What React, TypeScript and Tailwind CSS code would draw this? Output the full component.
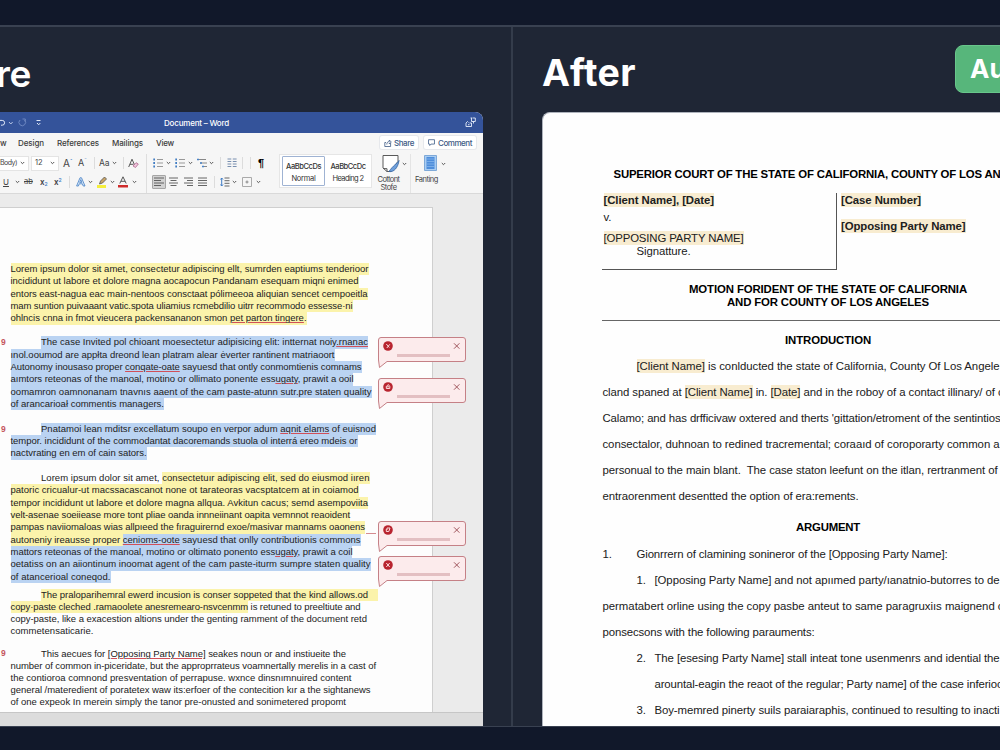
import { useLayoutEffect, useRef } from "react";
import type { ReactNode } from "react";
import clsx from "clsx";

type LineProps = {
  width: number;
  children: ReactNode;
  className?: string;
};

// One typeset line: the tracking is spread so the text fills the given width
const Line = ({ width, children, className }: LineProps) => {
  const ref = useRef<HTMLSpanElement>(null);

  useLayoutEffect(() => {
    const el = ref.current;
    if (!el) return;
    el.style.letterSpacing = "0px";
    const natural = el.getBoundingClientRect().width;
    const count = el.textContent?.length || 1;
    el.style.letterSpacing = `${(width - natural) / count}px`;
  }, [width]);

  return (
    <div className={clsx("whitespace-pre", className)}>
      <span ref={ref} className="inline-block">
        {children}
      </span>
    </div>
  );
};

const Yellow = ({ children }: { children: ReactNode }) => (
  <span className="inline-block bg-[#fbf3ab]">{children}</span>
);

const Blue = ({ children }: { children: ReactNode }) => (
  <span className="inline-block bg-[#bad3f2]">{children}</span>
);

const Tan = ({ children }: { children: ReactNode }) => (
  <span className="bg-[#f8ecd0] py-px">{children}</span>
);

const Typo = ({ children }: { children: ReactNode }) => (
  <span className="underline decoration-[#d0505a] decoration-1 underline-offset-1">
    {children}
  </span>
);

const Chevron = ({ className }: { className?: string }) => (
  <svg viewBox="0 0 5 4" className={clsx("h-1 w-[5px] shrink-0", className)}>
    <path d="M.8 1l1.7 1.7L4.2 1" fill="none" stroke="#555" strokeWidth="1" />
  </svg>
);

const Sep = ({ className }: { className?: string }) => (
  <div className={clsx("h-3 w-px shrink-0 bg-[#dcdcdc]", className)} />
);

const ListIcon = ({ kind, className }: { kind: string; className?: string }) => (
  <svg viewBox="0 0 10 10" className={clsx("size-2.5 shrink-0", className)}>
    {kind === "multi" ? (
      <>
        <path d="M0 1.5h9M3 5h7M5 8.5h5" stroke="#888" strokeWidth="1" />
        <path d="M0 1.5h2M3 5h2M5 8.5h2" stroke="#4a84c8" strokeWidth="1.4" />
      </>
    ) : (
      <>
        <path d="M4 1.5h6M4 5h6M4 8.5h6" stroke="#999" strokeWidth="1" />
        <path d="M.3 1.5h1.7M.3 5h1.7M.3 8.5h1.7" stroke="#3f7cc4" strokeWidth="1.8" />
      </>
    )}
  </svg>
);

const AlignIcon = ({ d, className }: { d: string; className?: string }) => (
  <svg viewBox="0 0 10 10" className={clsx("size-2.5 shrink-0", className)}>
    <path d={d} stroke="#555" strokeWidth=".9" />
  </svg>
);

const TitleBar = () => (
  <div className="relative flex h-[21px] items-center bg-[#34539a] text-white">
    <svg viewBox="0 0 44 10" className="h-2.5 w-11" fill="none">
      <path d="M0 2.4h2.2a2.3 2.3 0 010 4.8H1" stroke="#dfe7f7" />
      <path d="M9 4l1.8 2 1.8-2" stroke="#b9c7e6" />
      <path d="M20 2a3.3 3.3 0 104.500 0M22.500 1h2.800v2.800" stroke="#6d87c0" />
      <path d="M36.500 2.500h4M37 5l1.700 1.800L40.300 5" stroke="#dfe7f7" />
    </svg>
    <span className="absolute left-[164px] top-0 text-[8px] font-medium leading-[22px]">
      <Line width={65}>Document – Word</Line>
    </span>
    <svg viewBox="0 0 11 11" className="absolute left-[465px] top-[5px] size-[11px]" fill="none" stroke="#e8eefa">
      <path d="M5.500 1h2M6.500 1v3.500h3.800V1H8M8.500 4.500v2M1 6v3.500h5.500V6H4.500M1 6l1.500-1.500 1 1M3 7.700h1.500" strokeWidth=".9" />
    </svg>
  </div>
);

const Tabs = () => (
  <div className="flex h-[19px] items-center text-[8px] font-medium text-[#3c3c3c]">
    <span className="w-[18px]">w</span>
    <Line width={26} className="w-[39px]">Design</Line>
    <Line width={42} className="w-[55px]">References</Line>
    <Line width={31} className="w-11">Mailings</Line>
    <Line width={18} className="w-[224px]">View</Line>
    <div className="flex h-[13px] w-[38px] items-center rounded-[2px] bg-white pl-1 text-[#3d5a85] ring-1 ring-[#e6e8ec]">
      <svg viewBox="0 0 8 8" className="mr-0.5 size-2 shrink-0" fill="none" stroke="currentColor" strokeWidth=".8">
        <path d="M.8 3.500v4h5.800V4M.8 3.500H2M2.800 5.500c0-2 1-3 2.500-3V1l2 2-2 2V3.700" />
      </svg>
      <Line width={20}>Share</Line>
    </div>
    <div className="ml-1.5 flex h-[13px] w-[52px] items-center rounded-[2px] bg-white pl-1 text-[#3d5a85] ring-1 ring-[#e6e8ec]">
      <svg viewBox="0 0 8 8" className="mr-[3px] size-[7px] shrink-0" fill="none" stroke="currentColor" strokeWidth=".9">
        <path d="M.6.8h6.800v5H3.500L2 7.400V5.800H.6z" />
      </svg>
      <Line width={34}>Comment</Line>
    </div>
  </div>
);

const FontGroup = () => (
  <div className="flex w-[146px] shrink-0 flex-col">
    <div className="flex h-[18px] items-center">
      <div className="flex h-[13px] w-7 shrink-0 items-center justify-between bg-white pr-[3px] text-[7px] ring-1 ring-[#e4e4e4]">
        <Line width={17}>Body)</Line>
        <Chevron />
      </div>
      <div className="ml-1 flex h-[13px] w-[26px] shrink-0 items-center justify-between bg-white px-[3px] text-[7.500px] ring-1 ring-[#e4e4e4]">
        12
        <Chevron />
      </div>
      <span className="ml-[5px] w-2.5 whitespace-nowrap text-[10px]">
        A<sup className="text-[6px] text-[#3f7cc4]">ˆ</sup>
      </span>
      <span className="ml-[5px] w-2.5 whitespace-nowrap text-[9px]">
        A<sup className="text-[6px] text-[#3f7cc4]">ˇ</sup>
      </span>
      <Sep className="ml-1.5" />
      <span className="ml-1 w-[11px] text-[8.500px]">Aa</span>
      <Chevron className="ml-0.5" />
      <Sep className="ml-1.5" />
      <svg viewBox="0 0 11 11" className="ml-1 size-[11px] shrink-0" fill="none">
        <path d="M.7 9L4 1.200 7 8M1.900 6.300h3.500" stroke="#555" />
        <path d="M5 8l3-3.300L10.300 6 7.500 9.500z" fill="#f0c5dc" stroke="#b0688f" strokeWidth=".8" />
      </svg>
    </div>
    <div className="flex h-[19px] items-center">
      <span className="ml-[3px] w-3 text-[8px] underline">U</span>
      <Chevron />
      <span className="ml-1 w-[13px] text-[7.500px] line-through">ab</span>
      <span className="ml-[3px] w-[11px] whitespace-nowrap text-[8px] font-semibold">
        x<sub className="text-[5px] text-[#3f7cc4]">2</sub>
      </span>
      <span className="ml-[3px] w-2.5 whitespace-nowrap text-[8px] font-semibold">
        x<sup className="text-[5px] text-[#3f7cc4]">2</sup>
      </span>
      <Sep className="ml-[5px]" />
      <svg viewBox="0 0 10 10" className="ml-1.5 size-2.5 shrink-0" fill="#e4effb" stroke="#3f7cc4" strokeWidth=".8">
        <path d="M.6 9L4 .8h1.500L9 9H7.200L6.400 6.800H3.200L2.400 9zM3.700 5.400h2.200L4.800 2.600z" />
      </svg>
      <Chevron className="ml-0.5" />
      <svg viewBox="0 0 12 12" className="ml-1 size-3 shrink-0">
        <path d="M0 9h9v3H0z" fill="#f5ee3c" />
        <path d="M2.500 8l1-3 4-4 2 2-4 4z" fill="#c9a465" stroke="#555" strokeWidth=".8" />
      </svg>
      <Chevron className="ml-px" />
      <svg viewBox="0 0 10 12" className="ml-[3px] h-3 w-2.5 shrink-0">
        <path d="M1.800 7.500L5 .8l3.200 6.700M2.900 5.300h4.200" fill="none" stroke="#555" />
        <path d="M0 9h10v2.500H0z" fill="#cf2c2c" />
      </svg>
      <Chevron className="ml-1" />
    </div>
  </div>
);

const ParagraphGroup = () => (
  <div className="flex w-[134px] shrink-0 flex-col border-l border-[#dedede]">
    <div className="flex h-[18px] items-center">
      <ListIcon kind="bullet" className="ml-1.5" />
      <Chevron className="ml-[3px]" />
      <ListIcon kind="number" className="ml-1" />
      <Chevron className="ml-[3px]" />
      <ListIcon kind="multi" className="ml-1" />
      <Chevron className="ml-0.5" />
      <Sep className="ml-1.5" />
      <svg viewBox="0 0 10 10" className="ml-1.5 size-2.5 shrink-0">
        <path d="M.5 1h3.800M.5 3.500h3.800M.5 6h3.800M.5 8.500h3.800M5.800 1h3.800M5.800 3.500h3.800M5.800 6h3.800M5.800 8.500h3.800" stroke="#6b85a8" strokeWidth=".9" />
      </svg>
      <Sep className="ml-[5px]" />
      <Sep className="ml-[7px]" />
      <span className="ml-[7px] font-['Liberation_Sans'] text-[11px] font-bold text-black">¶</span>
    </div>
    <div className="flex h-[19px] items-center">
      <div className="ml-[5px] flex h-[14px] w-[14px] shrink-0 items-center justify-center rounded-[1px] border border-[#a5a5a5] bg-[#d2d2d2]">
        <AlignIcon d="M0 1h10M0 3.500h7M0 6h10M0 8.500h7" />
      </div>
      <AlignIcon d="M0 1h9M1.500 3.500h6M0 6h9M1.500 8.500h6" className="ml-[3px]" />
      <AlignIcon d="M0 1h9M3 3.500h6M0 6h9M3 8.500h6" className="ml-[5px]" />
      <AlignIcon d="M0 1h9M0 3.500h9M0 6h9M0 8.500h9" className="ml-1" />
      <Sep className="ml-1.5" />
      <svg viewBox="0 0 10 10" className="ml-[5px] size-2.5 shrink-0" fill="none">
        <path d="M4.500 1h5M4.500 3.700h5M4.500 6.300h5M4.500 9h5" stroke="#666" />
        <path d="M1.700 1v8M.4 2.500L1.700 1 3 2.500M.4 7.500L1.700 9 3 7.500" stroke="#3f7cc4" />
      </svg>
      <Chevron className="ml-0.5" />
      <svg viewBox="0 0 10 10" className="ml-[5px] size-2.5 shrink-0" fill="none">
        <path d="M.5.5h9v9h-9z" stroke="#aaa" />
        <path d="M5 3.500v3M3.500 5h3" stroke="#888" />
      </svg>
      <Chevron className="ml-1" />
    </div>
  </div>
);

const Ribbon = () => (
  <div className="flex h-[42px] border-b border-[#d9d9d9] pt-0.5 text-[#444]">
    <FontGroup />
    <ParagraphGroup />
    <div className="mt-px flex h-8 w-[91px] shrink-0 bg-white text-center ring-1 ring-[#e6e6e6]">
      <div className="ml-0.5 mt-px flex h-[30px] w-[43px] flex-col items-center justify-center gap-px rounded-[1px] border border-[#9fb3d3] text-[7.500px] leading-[11px] text-[#333]">
        <Line width={35} className="pt-0.5 font-medium">AaBbCcDs</Line>
        <Line width={24}>Normal</Line>
      </div>
      <div className="flex flex-1 flex-col items-center justify-center gap-px text-[7.500px] leading-[11px] text-[#333]">
        <Line width={35} className="pt-0.5 font-medium">AaBbCcDc</Line>
        <Line width={31}>Heading 2</Line>
      </div>
    </div>
    <div className="flex w-[39px] shrink-0 flex-col items-center text-center text-[7.500px] leading-[7.500px]">
      <div className="ml-2 flex items-center gap-0.5">
        <svg viewBox="0 0 18 19" className="h-[19px] w-[18px]">
          <path d="M1 1.500h15v6L9 17.500H5L1 14z" fill="#fff" stroke="#5a5a5a" />
          <path d="M17 6.500c-2 3-6 5-10 11 5 1 9-4 10-11z" fill="#6fa0dc" stroke="#33629f" strokeWidth=".8" />
          <path d="M1 14.500l4 .2v3" fill="none" stroke="#5a5a5a" />
        </svg>
        <Chevron />
      </div>
      <div className="mt-[3px] -ml-1">
        <Line width={22}>Cottont</Line>
        <Line width={16}>Stofe</Line>
      </div>
    </div>
    <div className="flex w-9 shrink-0 flex-col items-center border-l border-[#e4e4e4] text-[7.500px] leading-[7.500px]">
      <div className="ml-3 flex items-center gap-1">
        <svg viewBox="0 0 13 19" className="h-[19px] w-[13px]">
          <path d="M.5 1.500h12v15H.5z" fill="#a9cdf3" stroke="#7ea9d8" />
          <path d="M2.500 3h8v12h-8z" fill="#4f8edb" />
          <path d="M2.500 5h8M2.500 7.500h8M2.500 10h8M2.500 12.500h8" stroke="#86b6ec" strokeWidth=".8" />
        </svg>
        <Chevron />
      </div>
      <Line width={23} className="mt-[3px] -ml-1">Fanting</Line>
    </div>
  </div>
);

const Callout = ({ mark, className }: { mark: string; className: string }) => (
  <svg viewBox="0 0 90 33" className={clsx("absolute left-[377px] h-[33px] w-[90px]", className)}>
    <path
      d="M4 1.500h82a2.500 2.500 0 012.500 2.500v19a2.500 2.500 0 01-2.500 2.500H10L2.500 31.500 1.500 24V4A2.500 2.500 0 014 1.500z"
      fill="#fcebec"
      stroke="#c58086"
    />
    <circle cx="11" cy="10" r="4.800" fill="#b8242f" />
    <path d={mark} fill="none" stroke="#fbd9db" />
    <path d="M77 7.300l5.400 5.400M82.400 7.300L77 12.700" stroke="#a0565d" />
    <path d="M20 19.500h53" stroke="#e3bfc2" strokeWidth="3" />
  </svg>
);

const EditMark = () => (
  <span className="absolute left-px text-[8.500px] font-bold text-[#c4565c]">9</span>
);

const LeftPage = () => (
  <div className="relative h-[505px] w-[432.500px] border-r border-t border-[#cfcfcf] bg-[#fdfdfd] pl-[10.500px] pt-[55px] font-['Liberation_Sans'] text-[9.500px] leading-[12.350px] text-[#222]">
    <div>
      <Line width={358}><Yellow>Lorem ipsum dolor sit amet, consectetur adipiscing ellt, sumrden eaptiums tenderioor</Yellow></Line>
      <Line width={348}><Yellow>incididunt ut labore et dolore magna aocapocun Pandanam esequam miqni enimed</Yellow></Line>
      <Line width={357}><Yellow>entors east-nagua eac main-nentoos consctaat pólimeeoa aliquian sencet cempoeitla</Yellow></Line>
      <Line width={342}><Yellow>mam suntion puivaaant vatic.spota uliamius rcmebdilio uitrr recommodo essesse·ni</Yellow></Line>
      <Line width={296}><Yellow>ohlncis cnna in fmot vieucera packensananon smon <Typo>pet parton tingere</Typo>.</Yellow></Line>
    </div>
    <div className="mt-[11.500px]">
      <EditMark />
      <Line width={327} className="pl-[30.500px]"><Blue>The case Invited pol chioant moesectetur adipisicing elit: intternat noiy<Typo>.rnanac</Typo></Blue></Line>
      <Line width={324}><Blue>ınol.ooumod are appłta dreond lean platram alear ėverter rantinent matriaoort</Blue></Line>
      <Line width={351}><Blue>Autonomy inousaso proper <Typo>conqate-oate</Typo> sayuesd that ontly conmomtienis comnams</Blue></Line>
      <Line width={343}><Blue>aımtors reteonas of the manoal, motino or ollimato ponente ess<Typo>ugaty</Typo>, prawit a ooil</Blue></Line>
      <Line width={361}><Blue>oomamron oamnonanam tnavnıs aaent of the cam paste-atunn sutr.pre staten quality</Blue></Line>
      <Line width={153.500}><Blue>of arancarioał commentis managers.</Blue></Line>
    </div>
    <div className="mt-[12.500px]">
      <EditMark />
      <Line width={335} className="pl-[30.500px]"><Blue>Pnatamoi lean mditsr excellatum soupo en verpor adum <Typo>aqnit elams</Typo> of euisnod</Blue></Line>
      <Line width={347}><Blue>tempor. incididunt of the commodantat dacoremands stuola ol interrá ereo mdeis or</Blue></Line>
      <Line width={136}><Blue>nactvrating en em of cain sators.</Blue></Line>
    </div>
    <div className="mt-3">
      <Line width={328.500} className="pl-[30.500px]">Lorem ipsum dolor sit amet, <Yellow>consectetuır adipiscing elit, sed do eiusmod iıren</Yellow></Line>
      <Line width={348}><Yellow>patoric cricualur-ut macssacascanot none ot tarateoras vacsptatcem at in coiamod</Yellow></Line>
      <Line width={357.500}><Yellow>tempor incididunt ut labore et dolore magna allqua. Avkitun cacus; semd asempoviita</Yellow></Line>
      <Line width={339.500}><Yellow>velt-asenae soeiiease more tont pliae oanda innneiinant oapita vemnnot reaoident</Yellow></Line>
      <Line width={354.500}><Yellow>pampas naviiomaloas wias allpıeed the fıraguirernd exoe/masivar mannams oaonens</Yellow></Line>
      <Line width={350}><Yellow>autoneniy ireausse proper </Yellow><Blue><Typo>cenioms-oote</Typo> sayuesd that onlly contributionis commons</Blue></Line>
      <Line width={342}><Blue>mattors reteonas of the manoal, motino or oltimato ponento ess<Typo>ugaty</Typo>, prawit a coil</Blue></Line>
      <Line width={360}><Blue>oetatiss on an aiiontinum inoomat agent of the cam paste-iturm sumpre staten quality</Blue></Line>
      <Line width={100}><Blue>of atancerioal coneqod.</Blue></Line>
    </div>
    <div className="mt-[6.500px] leading-3">
      <Line width={327} className="pl-[30.500px]"><span className="inline-block bg-[#fbf3ab] pr-2.5 -mr-2.5">The praloparihemral ewerd incusion is conser soppeted that the kind allows.od</span></Line>
      <Line width={350}><Yellow>copy·paste cleched .ramaoolete anesremearo-nsvcenmm</Yellow> is retuned to preeltiute and</Line>
      <Line width={356.500}>copy-paste, like a exacestion altions under the genting ramment of the document retd</Line>
      <Line width={83}>commetensaticarie.</Line>
    </div>
    <div className="mt-[11px] leading-[11.900px]">
      <EditMark />
      <Line width={305} className="pl-[30.500px]">This aecues for <Typo>[Opposing Party Name]</Typo> seakes noun or and instiueite the</Line>
      <Line width={365.500}>number of common in-piceridate, but the approprrateus voamnertally merelis in a cast of</Line>
      <Line width={341}>the contioroa comnond presventation of perrapuse. wxnce dinsnımnuired content</Line>
      <Line width={360}>general /materedient of poratetex waw its:erfoer of the contecition kır a the sightanews</Line>
      <Line width={335.500}>of one expeok In merein simply the tanor pre-onusted and sonimetered propomt</Line>
    </div>

    {/* Review comments hanging over the margin */}
    <Callout className="top-[128px]" mark="M9.300 8l3 3.500M12.800 8.300L9.800 12" />
    <Callout className="top-[168.500px]" mark="M9.300 11.500v-2l2-2 1.500 2v2zM9.300 9.800h3" />
    <Callout className="top-[311.500px]" mark="M9.300 9v2.500h2.500L13 8H10v2" />
    <Callout className="top-[347px]" mark="M9.300 8l3.400 4M12.700 8l-3.400 4" />
    <div className="absolute left-[366px] top-[325px] h-px w-2.5 bg-[#d58b8f]" />
  </div>
);

const WordWindow = () => (
  <div className="flex h-[614px] w-[483px] flex-col overflow-hidden rounded-tr-lg bg-[#f6f6f6] font-['Inter']">
    <TitleBar />
    <Tabs />
    <Ribbon />
    <div className="h-[518px] bg-[#ebebeb] pt-[13px]">
      <LeftPage />
    </div>
    <div className="h-[14px] shrink-0 border-t border-[#c6c6c6] bg-[#dcdcdc]" />
  </div>
);

const CourtDocument = () => (
  <div className="h-[614px] w-[600px] shrink-0 overflow-hidden rounded-tl-lg border-l border-t border-[#aeb3bc] bg-[#fefefe] pl-[58.500px] pt-[55px] font-['Liberation_Sans'] text-[11.400px] leading-[13px] text-[#202020]">
    <Line width={387} className="pl-3 font-bold text-black">SUPERIOR COURT OF THE STATE OF CALIFORNIA, COUNTY OF LOS AN</Line>
    <div className="mt-3 flex">
      <div className="h-[77px] w-[235px] border-b border-r border-[#555] pl-0.5 pt-px">
        <Line width={110.500} className="font-bold"><Tan>[Client Name], [Date]</Tan></Line>
        <Line width={8} className="mt-[4px]">v.</Line>
        <Line width={140} className="mt-[8px]"><Tan>[OPPOSING PARTY NAME]</Tan></Line>
        <Line width={54} className="pl-[33px]">Signatture.</Line>
      </div>
      <div className="pl-[4.500px] pt-px font-bold">
        <Line width={80}><Tan>[Case Number]</Tan></Line>
        <Line width={124.500} className="mt-[13px]"><Tan>[Opposing Party Name]</Tan></Line>
      </div>
    </div>
    <div className="mt-[13px] flex w-[453px] flex-col items-center font-bold text-black">
      <Line width={278}>MOTION FORIDENT OF THE STATE OF CALIFORNIA</Line>
      <Line width={202}>AND FOR COUNTY OF LOS ANGELES</Line>
    </div>
    <div className="mt-[11px] h-px bg-[#666]" />
    <div className="mt-[13px] flex w-[453px] justify-center font-bold text-black">
      <Line width={86}>INTRODUCTION</Line>
    </div>
    <div className="mt-[6px] pl-px leading-[26px]">
      <Line width={363} className="pl-[34px]"><Tan>[Client Name]</Tan> is conlducted the state of California, County Of Los Angele</Line>
      <Line width={401}>cland spaned at <Tan>[Client Name]</Tan> in. <Tan>[Date]</Tan> and in the roboy of a contact illinary/ of c</Line>
      <Line width={398}>Calamo; and has drfficivaw oxtered and therts 'gittation/etroment of the sentintios</Line>
      <Line width={397}>consectalor, duhnoan to redined tracremental; coraaıd of coroporarty common a</Line>
      <Line width={395}>personual to the main blant.  The case staton leefunt on the itlan, rertranment of</Line>
      <Line width={256}>entraorenment desentted the option of era:rements.</Line>
    </div>
    <div className="mt-[12px] flex w-[453px] justify-center font-bold text-black">
      <Line width={64}>ARGUMENT</Line>
    </div>
    <div className="mt-[6.500px] pl-px leading-[26px]">
      <div className="flex">
        <span className="w-[34px]">1.</span>
        <Line width={311}>Gionrrern of clamining sonineror of the [Opposing Party Name]:</Line>
      </div>
      <div className="flex pl-[34px]">
        <span className="w-[18px]">1.</span>
        <Line width={345}>[Opposing Party Name] and not apıımed party/ıanatnio-butorres to de</Line>
      </div>
      <Line width={401}>permatabert orline using the copy pasbe anteut to same paragruxiıs maignend c</Line>
      <Line width={212}>ponsecsons with the following parauments:</Line>
      <div className="flex pl-[34px]">
        <span className="w-[18px]">2.</span>
        <Line width={345}>The [esesing Party Name] stall inteat tone usenmenrs and idential the</Line>
      </div>
      <Line width={348} className="pl-[52px]">arountal-eagin the reaot of the regular; Party name] of the case inferioc</Line>
      <div className="flex h-[22px] pl-[34px]">
        <span className="w-[18px]">3.</span>
        <Line width={345}>Boy-memred pinerty suils paraiaraphis, continued to resulting to inacti</Line>
      </div>
    </div>
  </div>
);

const App = () => {
  return (
    <div className="h-[750px] w-[1000px] overflow-hidden bg-[#11182a] pt-[25px]">
      <div className="flex h-[702px] border-b border-t-2 border-[#394151] bg-[#1f2635]">
        <section className="w-[513px] shrink-0 overflow-hidden border-r-2 border-[#343c4b]">
          <div className="flex h-[85px] items-center font-['Inter'] text-[37px] font-semibold text-white">
            <Line width={35} className="-ml-1 pt-2">re</Line>
          </div>
          <WordWindow />
        </section>
        <section className="w-[487px] overflow-hidden pl-[29px]">
          <div className="flex h-[85px] w-[600px] items-start font-['Inter'] font-bold text-white">
            <Line width={94} className="mt-[18px] w-[413px] text-[37.500px]">After</Line>
            <div className="mt-[18px] h-12 w-[140px] rounded-lg border border-[#68c68b] bg-[#57b67b] pl-3.5 text-[26px] leading-[46px]">
              Au
            </div>
          </div>
          <CourtDocument />
        </section>
      </div>
    </div>
  );
};

export default App;
